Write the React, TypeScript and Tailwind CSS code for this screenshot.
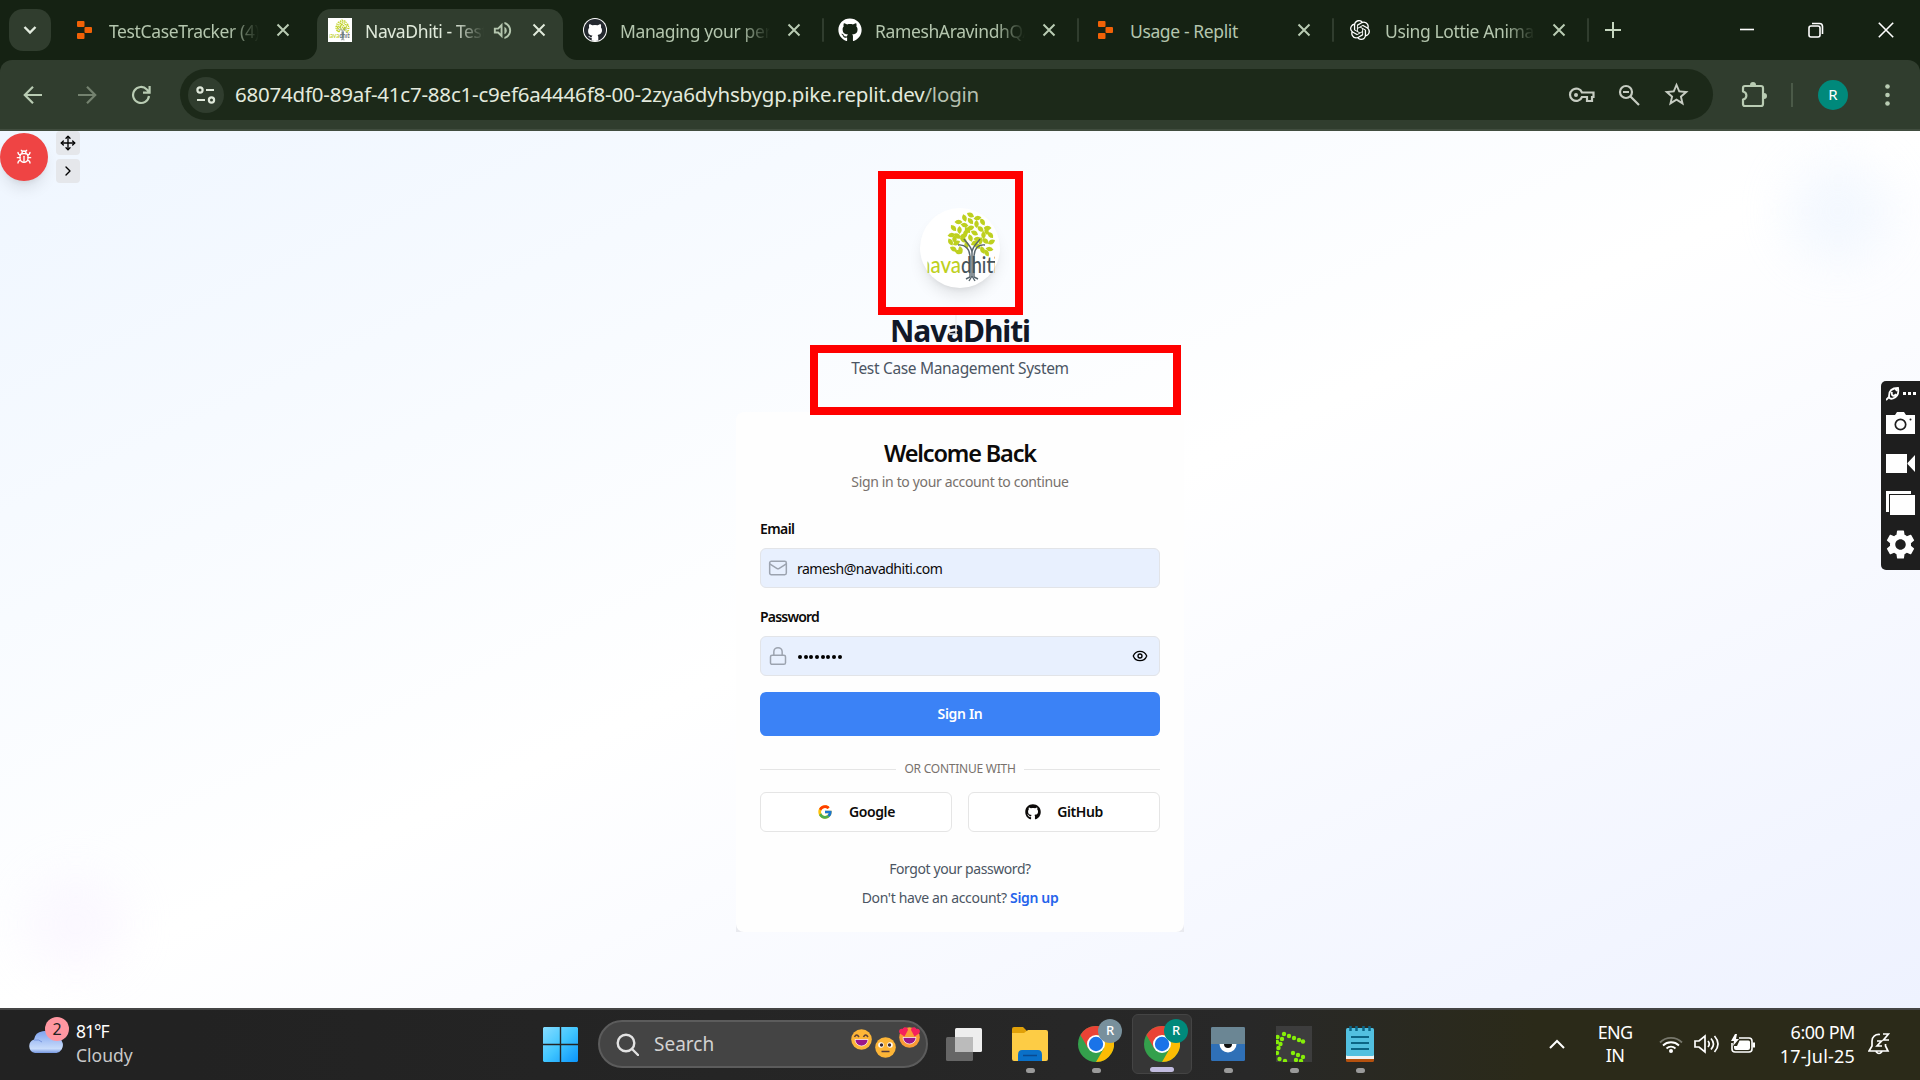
import React from "react";
import { Bug, Move, ChevronRight, Mail, Lock, Eye } from "lucide-react";
import { FaGithub } from "react-icons/fa";
import { FcGoogle } from "react-icons/fc";
import { SiOpenai } from "react-icons/si";
import { MdOutlineVolumeUp, MdStarOutline, MdSettings } from "react-icons/md";

type P = { className?: string };

const CloseX = ({ className = "" }: P) => (
  <svg viewBox="0 0 14 14" className={`h-3.5 w-3.5 shrink-0 ${className}`} fill="none" stroke="currentColor" strokeWidth="2">
    <path d="M1.5 1.5l11 11M12.5 1.5l-11 11" />
  </svg>
);

const ReplitIcon = () => (
  <svg viewBox="0 0 15 18" className="h-[18px] w-[15px]" fill="#f26207">
    <rect x="0" y="0" width="7.5" height="6" rx="1" />
    <rect x="7.5" y="6" width="7.5" height="6" rx="1" />
    <rect x="0" y="12" width="7.5" height="6" rx="1" />
  </svg>
);

const leaves: [number, number, number][] = [
  [50, 6, 0], [44, 9, 40], [57, 9, -40], [50, 12, 20], [38, 13, -30], [62, 13, 30], [44, 16, -20], [56, 15, 60],
  [33, 19, 20], [39, 21, 60], [50, 19, -50], [60, 20, 10], [67, 19, -30], [31, 26, -40], [37, 27, 10], [45, 24, 80],
  [54, 24, 0], [63, 26, 60], [70, 26, 20], [30, 33, 30], [36, 34, -60], [43, 31, 0], [50, 29, 40], [57, 30, -30],
  [65, 32, 10], [71, 33, -60], [33, 40, 0], [40, 41, 50], [62, 41, 40], [69, 40, -20], [38, 43, -20], [66, 44, 30],
  [46, 36, 60], [57, 37, 10], [34, 30, 60], [60, 32, 70], [54, 34, -60], [43, 27, -50], [66, 22, 50], [47, 21, 20],
];

const TreeLogo = ({ className = "", small = false }: P & { small?: boolean }) => (
  <svg viewBox={small ? "4 0 78 78" : "0 0 80 80"} className={className}>
    <defs>
      <clipPath id={small ? "clipSmall" : "clipBig"}>
        <rect x="7.5" y="0" width="67.5" height="80" />
      </clipPath>
    </defs>
    <g fill="#bed01f">
      {leaves.map(([x, y, r], i) => (
        <path key={i} d="M-4 0Q0-4.600 4 0Q0 4.600-4 0" transform={`translate(${x + 0.5} ${y + 1}) rotate(${r + 30})`} />
      ))}
    </g>
    <g fill="none" stroke="#57646b" strokeWidth="1.400">
      <path d="M38 37c7-1 12 4 12 12v20l-4 2M65 37c-7-1-11 4-11 12v20l4 2" />
      <path d="M44 31c3 5 8 7 8 14v24M60 31c-3 5-8 7-8 14M52 68l-3 5M52 68l3 5" />
    </g>
    <g clipPath={small ? "url(#clipSmall)" : "url(#clipBig)"}>
      <text x="-1" y="65" fontFamily="Lato, sans-serif" fontSize="23" fontWeight="500" textLength="42" lengthAdjust="spacingAndGlyphs" fill="#bed01f">nava</text>
      <text x="41" y="65" fontFamily="Lato, sans-serif" fontSize="23" fontWeight="500" textLength="37" lengthAdjust="spacingAndGlyphs" fill="#46545b">dhiti</text>
    </g>
  </svg>
);

const ghInverse = (
  <span className="flex h-6 w-6 items-center justify-center rounded-full bg-white">
    <span className="flex h-[22px] w-[22px] items-center justify-center overflow-hidden rounded-full bg-[#24292f]">
      <svg viewBox="0 0 22 22" className="h-[22px] w-[22px]" fill="#fff">
        <path d="M5.2 5.2c1.200 0 2.300.5 3 1.100a11 11 0 0 1 5.600 0c.7-.6 1.800-1.100 3-1.100.5 1.300.3 2.400.1 3 .8 1 1.100 2 1.100 3.100 0 3.400-2.300 4.300-4.400 4.600.4.5.7 1.200.7 2.200V22H7.700v-3c-2 .3-2.700-.7-3.400-1.900.8-.2 1.300.1 1.900.8.400.5.900.6 1.500.4.1-.9.400-1.300.8-1.700-2.300-.3-4.400-1.300-4.400-4.700 0-1.300.400-2.300 1.100-3.100-.2-.7-.4-1.800 0-3.600z" />
      </svg>
    </span>
  </span>
);

function Tab({ icon, title, fade = true, divider = false }: { icon: React.ReactNode; title: string; fade?: boolean; divider?: boolean }) {
  return (
    <div className="relative flex h-[42px] w-[255px] shrink-0 items-center pl-4 text-[#b4c6ae]">
      <span className="flex w-6 shrink-0 justify-center">{icon}</span>
      <span className={`ml-[13px] w-[150px] shrink-0 overflow-hidden whitespace-nowrap pt-[3px] text-[17.5px] tracking-[-0.38px] ${fade ? "[mask-image:linear-gradient(to_right,black_80%,transparent)]" : ""}`}>{title}</span>
      <CloseX className="ml-[17px] text-[#b9ccb3]" />
      {divider && <span className="ml-[21px] h-6 w-0.5 shrink-0 rounded bg-[#303d2e]" />}
    </div>
  );
}

function TabStrip() {
  return (
    <div className="flex h-[60px] items-start bg-[#152213] pt-[9px]">
      <div className="ml-[9px] flex h-[42px] w-[42px] shrink-0 items-center justify-center rounded-[14px] bg-[#303d2e] text-[#e3ecdf]">
        <svg viewBox="0 0 14 10" className="h-2.5 w-3.5" fill="none" stroke="currentColor" strokeWidth="2.4"><path d="M1.500 2l5.500 5.500L12.500 2" /></svg>
      </div>
      <div className="flex w-[266px] shrink-0 overflow-hidden pl-[5px]">
        <Tab icon={<ReplitIcon />} title="TestCaseTracker (4)" />
      </div>
      <div className="relative flex h-[51px] w-[246px] shrink-0 items-center rounded-t-[14px] bg-[#303d2e] pb-[9px] pl-[11px] text-[#e0eadb]">
        <svg viewBox="0 0 14 14" className="absolute bottom-0 -left-3.5 h-3.5 w-3.5" fill="#303d2e"><path d="M14 0v14H0A14 14 0 0 0 14 0" /></svg>
        <svg viewBox="0 0 14 14" className="absolute -right-3.5 bottom-0 h-3.5 w-3.5" fill="#303d2e"><path d="M0 0v14h14A14 14 0 0 1 0 0" /></svg>
        <span className="flex h-6 w-6 shrink-0 bg-white"><TreeLogo small className="h-6 w-6" /></span>
        <span className="ml-[13px] w-[119px] shrink-0 overflow-hidden pt-[3px] text-[17.5px] tracking-[-0.38px] whitespace-nowrap [mask-image:linear-gradient(to_right,black_75%,transparent)]">NavaDhiti - Test Case</span>
        <MdOutlineVolumeUp className="ml-[7px] h-[23px] w-[23px] shrink-0 text-[#b4c6ae]" />
        <CloseX className="ml-[18px]" />
      </div>
      <div className="flex pl-1">
        <Tab icon={ghInverse} title="Managing your personal" divider />
        <Tab icon={<FaGithub className="h-6 w-6 text-white" />} title="RameshAravindhQA" divider />
        <Tab icon={<ReplitIcon />} title="Usage - Replit" fade={false} divider />
        <Tab icon={<SiOpenai className="h-5 w-5 text-white" />} title="Using Lottie Animations" divider />
      </div>
      <svg viewBox="0 0 16 16" className="mt-[13px] ml-[18px] h-4 w-4 shrink-0" fill="none" stroke="#c5d6bf" strokeWidth="2"><path d="M8 0v16M0 8h16" /></svg>
      <div className="mr-[26px] ml-auto flex h-[42px] items-center text-white">
        <svg viewBox="0 0 14 14" className="h-3.5 w-3.5" stroke="currentColor" strokeWidth="1.600"><path d="M0 6.500h14" /></svg>
        <svg viewBox="0 0 16 16" className="ml-[54px] h-4 w-4" fill="none" stroke="currentColor" strokeWidth="1.600"><rect x="1" y="4" width="11" height="11" rx="2" /><path d="M4 1.500h7.500a3 3 0 0 1 3 3V12" /></svg>
        <svg viewBox="0 0 16 16" className="ml-[54px] h-4 w-4" fill="none" stroke="currentColor" strokeWidth="1.600"><path d="M.8.8l14.400 14.400M15.200.8L.8 15.200" /></svg>
      </div>
    </div>
  );
}

function Toolbar() {
  return (
    <div className="h-[71px] bg-[#152213]">
      <div className="flex h-[71px] items-center rounded-t-[12px] border-b-2 border-[#414d3f] bg-[#303d2e] text-[#b9ccb3]">
        <svg viewBox="0 0 20 20" className="ml-[23px] h-5 w-5" fill="none" stroke="currentColor" strokeWidth="2.200"><path d="M19 10H2.500M10 1.800L1.800 10l8.200 8.200" /></svg>
        <svg viewBox="0 0 20 20" className="ml-[34px] h-5 w-5 text-[#74826f]" fill="none" stroke="currentColor" strokeWidth="2.200"><path d="M1 10h16.500M10 1.800l8.200 8.200-8.200 8.200" /></svg>
        <svg viewBox="0 0 20 20" className="ml-[34px] h-5 w-5" fill="none" stroke="currentColor" strokeWidth="2.200"><path d="M18 11a8 8 0 1 1-2.200-6.600L18.300 7M18.600 1v6.600H12" /></svg>
        <div className="ml-[29px] flex h-[51px] w-[1533px] items-center rounded-full bg-[#1c2919] pr-[22px] pl-2">
          <span className="flex h-9 w-9 shrink-0 items-center justify-center rounded-full bg-[#303d2e] text-[#dfe8da]">
            <svg viewBox="0 0 20 18" className="h-[18px] w-5" fill="none" stroke="currentColor" strokeWidth="2.200"><circle cx="4" cy="4" r="2.600" /><path d="M10 4h8M1 14h8" /><circle cx="15.500" cy="14" r="2.600" /></svg>
          </span>
          <span className="ml-[11px] text-[20.500px] tracking-[-0.21px] whitespace-nowrap text-[#e3eadd]">68074df0-89af-41c7-88c1-c9ef6a4446f8-00-2zya6dyhsbygp.pike.replit.dev<span className="text-[#b6c0b0]">/login</span></span>
          <span className="ml-auto flex items-center text-[#c6ccc2]">
            <svg viewBox="0 0 27 18" className="h-[18px] w-[27px]" fill="none" stroke="currentColor" strokeWidth="2.200"><path d="M14 6.500h11.500v4.500h-1.500v4h-5v-4h-5a6.200 6.200 0 1 1 0-4.500z" /><circle cx="8" cy="9" r="2" fill="currentColor" stroke="none" /></svg>
            <svg viewBox="0 0 22 22" className="ml-[23px] h-[22px] w-[22px]" fill="none" stroke="currentColor" strokeWidth="2.200"><circle cx="8" cy="8" r="6" /><path d="M12.500 12.500l8.500 8.500M5 8h6" /></svg>
            <MdStarOutline className="ml-[22px] h-[29px] w-[29px]" />
          </span>
        </div>
        <svg viewBox="0 0 26 26" className="ml-[28px] h-[26px] w-[26px]" fill="none" stroke="currentColor" strokeWidth="2.200"><path d="M4 4h16q2 0 2 2v16q0 2-2 2H4q-2 0-2-2v-4.500c4.500-1 4.500-7 0-8V6q0-2 2-2z" strokeLinejoin="round" /><path d="M9 3a3 3 0 0 1 6 0zM23 11a3 3 0 0 1 0 6z" fill="currentColor" stroke="none" /></svg>
        <span className="ml-[24px] h-6 w-0.5 bg-[#4b5a48]" />
        <span className="ml-[25px] flex h-[30px] w-[30px] items-center justify-center rounded-full bg-[#00897b] text-[15px] text-white">R</span>
        <svg viewBox="0 0 5 22" className="ml-[37px] h-[22px] w-[5px]" fill="currentColor"><circle cx="2.500" cy="2.500" r="2.300" /><circle cx="2.500" cy="11" r="2.300" /><circle cx="2.500" cy="19.500" r="2.300" /></svg>
      </div>
    </div>
  );
}

function LoginCard() {
  return (
    <div className="h-[520px] w-[448px] rounded-lg bg-[#fefefe] px-6 pt-[25px] text-sm">
      <h2 className="text-center text-[23.500px] leading-8 font-semibold tracking-[-1.160px] text-[#0c0a09]">Welcome Back</h2>
      <p className="mt-[3px] text-center leading-5 tracking-[-0.350px] text-[#78716c]">Sign in to your account to continue</p>
      <label className="mt-[27px] block leading-5 font-semibold tracking-[-0.600px] text-[#0c0a09]">Email</label>
      <div className="mt-[9px] flex h-10 items-center rounded-md border border-[#e2e4e8] bg-[#e8f0fe] pl-[7px]">
        <Mail className="h-5 w-5 text-[#9ca3af]" strokeWidth={1.8} />
        <span className="ml-[9px] pt-0.5 tracking-[-0.500px] text-[#0c0a09]">ramesh@navadhiti.com</span>
      </div>
      <label className="mt-[19px] block leading-5 font-semibold tracking-[-0.800px] text-[#0c0a09]">Password</label>
      <div className="mt-[9px] flex h-10 items-center rounded-md border border-[#e2e4e8] bg-[#e8f0fe] pr-[11px] pl-[7px]">
        <Lock className="h-5 w-5 text-[#9ca3af]" strokeWidth={1.8} />
        <span className="ml-[10px] flex gap-[1.7px] pt-0.5">
          {Array.from({ length: 8 }, (_, i) => <span key={i} className="h-1 w-1 rounded-full bg-black" />)}
        </span>
        <Eye className="ml-auto h-4 w-4 text-black" />
      </div>
      <button className="mt-4 flex h-11 w-full items-center justify-center rounded-md bg-[#3b82f6] font-semibold tracking-[-0.3px] text-white">Sign In</button>
      <div className="mt-[24px] flex h-[18px] items-center text-xs text-[#78716c]">
        <span className="h-px flex-1 bg-[#e5e5e5]" />
        <span className="mx-2 tracking-[-0.240px] whitespace-nowrap">OR CONTINUE WITH</span>
        <span className="h-px flex-1 bg-[#e5e5e5]" />
      </div>
      <div className="mt-[14px] grid grid-cols-2 gap-4 font-semibold text-[#0c0a09]">
        <button className="flex h-10 items-center justify-center rounded-md border border-[#e5e5e5] bg-white"><FcGoogle className="mr-4 h-4 w-4" /><span className="tracking-[-0.4px]">Google</span></button>
        <button className="flex h-10 items-center justify-center rounded-md border border-[#e5e5e5] bg-white"><FaGithub className="mr-4 h-4 w-4" /><span className="tracking-[-0.4px]">GitHub</span></button>
      </div>
      <p className="mt-[27px] text-center leading-5 tracking-[-0.420px] text-[#4b5563]">Forgot your password?</p>
      <p className="mt-[9px] text-center leading-5 tracking-[-0.340px] text-[#4b5563]">Don't have an account? <span className="font-semibold text-[#2563eb]">Sign up</span></p>
    </div>
  );
}

function CapturePanel() {
  return (
    <div className="absolute top-[250px] right-0 flex h-[189px] w-[39px] flex-col items-center rounded-l-[5px] bg-[#1e1e1e] text-white">
      <svg viewBox="0 0 30 14" className="mt-[6px] h-3.5 w-[30px]" fill="none" stroke="#fff" strokeWidth="1.800">
        <path d="M3 9c0-5 3-8 9-8 1 5-1 9-5 10.500-3 .8-4-.5-4-2.500zM6 5c-1 4 2 5 4 2M0 13l3-3M9 1l2 3" />
        <g fill="#fff" stroke="none"><rect x="17" y="5" width="3" height="3" /><rect x="22" y="5" width="3" height="3" /><rect x="27" y="5" width="3" height="3" /></g>
      </svg>
      <svg viewBox="0 0 29 22" className="mt-[11px] h-[22px] w-[29px]"><path d="M0 3h9l2-3h7l2 3h9v19H0z" fill="#fff" /><circle cx="14.500" cy="12.500" r="5.200" fill="none" stroke="#1e1e1e" strokeWidth="1.700" /><circle cx="24.500" cy="7.500" r="1" fill="#1e1e1e" /></svg>
      <svg viewBox="0 0 29 19" className="mt-5 h-[19px] w-[29px]" fill="#fff"><path d="M0 0h21v19H0zM21.500 9l7.500-8v17l-7.500-8z" /></svg>
      <svg viewBox="0 0 29 24" className="mt-[18px] h-6 w-[29px]" fill="#fff"><path d="M0 0h25v3H3v18H0zM4 4h25v20H4z" /></svg>
      <MdSettings className="mt-[12px] h-[35px] w-[35px]" />
    </div>
  );
}

function Page() {
  return (
    <main className="relative flex h-[877px] flex-col items-center overflow-hidden bg-linear-to-br from-[#eff6ff] via-white to-[#eef2ff]">
      <div className="absolute top-[28px] right-[30px] h-[104px] w-[104px] rounded-full bg-[#dbeafe] opacity-30 blur-xl" />
      <div className="absolute bottom-[34px] left-[26px] h-[100px] w-[100px] rounded-full bg-[#f3e8ff] opacity-30 blur-xl" />
      <div className="absolute top-0.5 left-0 flex h-12 w-12 items-center justify-center rounded-full bg-[#ef4444] text-white shadow-lg"><Bug className="h-4 w-4" /></div>
      <div className="absolute top-0 left-14 flex h-6 w-6 items-center justify-center rounded bg-[#e5e7eb]"><Move className="h-4 w-4" /></div>
      <div className="absolute top-7 left-14 flex h-6 w-6 items-center justify-center rounded bg-[#e5e7eb]"><ChevronRight className="h-4 w-4" /></div>

      <div className="mt-[77px] h-20 w-20 rounded-full bg-white shadow-lg"><TreeLogo className="h-20 w-20" /></div>
      <h1 className="mt-[25px] text-[30px] leading-9 font-bold tracking-[-1.100px] whitespace-nowrap text-[#111827]">NavaDhiti</h1>
      <p className="mt-[7px] mb-[32px] h-6 text-[15.500px] leading-6 tracking-[-0.330px] whitespace-nowrap text-[#4b5563]">Test Case Management System</p>
      <div className="flex h-[520px] bg-linear-to-b from-transparent from-98% to-[#e9eaef] to-98%"><LoginCard /></div>

      <svg viewBox="0 0 12 24" className="absolute top-[184px] left-[947px] h-6 w-3" fill="none" stroke="#f1f1f3" strokeWidth="1.500"><path d="M9 0v19M1 17l7-2M2 19h6" /></svg>
      <div className="absolute top-[40px] left-[878px] h-36 w-[145px] border-8 border-[#ff0000]" />
      <div className="absolute top-[214px] left-[810px] h-[70px] w-[371px] border-8 border-[#ff0000]" />
      <CapturePanel />
    </main>
  );
}

const Chrome = ({ badge }: { badge: string }) => (
  <span className="relative flex h-9 w-9">
    <svg viewBox="0 0 36 36" className="h-9 w-9">
      <circle cx="18" cy="18" r="18" fill="#34a04c" />
      <path d="M18 9h15.600A18 18 0 0 1 18 36l7.800-13.500z" fill="#fbbc04" />
      <path d="M2.400 9A18 18 0 0 1 33.600 9H18l-7.800 13.500z" fill="#ea4335" />
      <circle cx="18" cy="18" r="9" fill="#fff" /><circle cx="18" cy="18" r="7.200" fill="#1a73e8" />
    </svg>
    <span className={`absolute -top-[7px] left-5 flex h-6 w-6 items-center justify-center rounded-full text-[13px] font-medium text-white ${badge}`}>R</span>
  </span>
);

function AppSlot({ children, active = false, idle = false }: { children: React.ReactNode; active?: boolean; idle?: boolean }) {
  return (
    <div className={`relative flex h-[60px] w-[60px] items-center justify-center rounded-md ${active ? "border border-[#444] bg-[#363636]" : ""}`}>
      {children}
      {!idle && <span className={`absolute bottom-px h-[5px] rounded-full ${active ? "w-6 bg-[#c2bce0]" : "w-[9px] bg-[#9a9a9a]"}`} />}
    </div>
  );
}

const Face = ({ kind, className = "" }: P & { kind: "grin" | "flat" | "love" }) => (
  <svg viewBox="0 0 21 21" className={`h-[21px] w-[21px] overflow-visible ${className}`}>
    <circle cx="10.500" cy="10.500" r="10.300" fill={kind === "love" ? "#f99b35" : "#fdb537"} />
    {kind === "flat" ? (
      <g><circle cx="6" cy="8" r="2.800" fill="#fff" /><circle cx="15" cy="8" r="2.800" fill="#fff" /><circle cx="6.500" cy="8" r="1.700" fill="#3d2a32" /><circle cx="14.500" cy="8" r="1.700" fill="#3d2a32" /><path d="M6.500 14.500h8" stroke="#553b3b" strokeWidth="1.500" /></g>
    ) : (
      <path d="M4 10.500h13a6.500 6.500 0 0 1-13 0z" fill="#9b1689" stroke="#fff" strokeWidth=".7" />
    )}
    {kind === "grin" && <path d="M3.500 8q2-4 4.500 0M12.500 8q2-4 4.500 0" stroke="#5d4037" strokeWidth="1.500" fill="none" />}
    {kind === "love" && (
      <g fill="#f5205c">
        <path d="M5.500 9.500L1 6.500C-1 4.500.5 1 3.500 2 4.500-.5 9-.5 9 3z" />
        <path d="M15.500 9.500L20 6.500c2-2 .5-5.500-2.500-4.500C16.500-.5 12-.5 12 3z" />
      </g>
    )}
  </svg>
);

const dots: [number, number][] = [[8, 8], [13, 10], [18, 12], [23, 14], [27, 15.5], [6, 13], [1.5, 11], [4.5, 18], [1, 16], [2.5, 22], [1, 27], [3.5, 33], [9, 35], [17, 27], [22, 29], [27, 31], [20, 34], [25, 35]];

function Taskbar() {
  return (
    <footer className="flex h-[72px] items-start border-t-2 border-[#454545] bg-linear-to-r from-[#222222] from-10% via-[#282828] via-65% to-[#2b2a19] to-80% pt-1 text-[18px] text-white">
      <div className="relative ml-[28px] flex h-[60px] w-[570px]">
        <svg viewBox="0 0 36 23" className="mt-[16px] h-[23px] w-9"><defs><linearGradient id="cl" x2="0" y2="1"><stop stopColor="#7fa3ee" /><stop offset=".8" stopColor="#c9dcfb" /><stop offset="1" stopColor="#7597e0" /></linearGradient></defs><path d="M7 23a7 7 0 0 1-1-13.500A10 10 0 0 1 25 7a8 8 0 0 1 3.500 16z" fill="url(#cl)" /><path d="M6 10q5-1 8 2" stroke="#7896de" fill="none" /></svg>
        <span className="absolute top-[3px] left-[17px] flex h-6 w-6 items-center justify-center rounded-full bg-[#ff97a1] text-[16px] text-[#222]">2</span>
        <div className="ml-3 pt-[5px] text-[17.500px] leading-6"><div className="tracking-[-1px]">81°F</div><div className="text-[#c9c9c9]">Cloudy</div></div>
        <svg viewBox="0 0 35 35" className="absolute top-[13px] left-[515px] h-[35px] w-[35px]"><defs><linearGradient id="win" x2="1" y2="1"><stop stopColor="#86dcff" /><stop offset=".5" stopColor="#41c6ff" /><stop offset="1" stopColor="#0a94fb" /></linearGradient></defs><path d="M1 0h15.800v16.800H0V1zM18.200 0H34l1 1v15.800H18.200zM0 18.200h16.800V35H1l-1-1zM18.200 18.200H35V34l-1 1H18.200z" fill="url(#win)" /></svg>
      </div>
      <div className="mt-1.5 flex h-12 w-[330px] shrink-0 items-center rounded-full border-2 border-[#5c5c5c] bg-[#444] pr-[6px] pl-4">
        <svg viewBox="0 0 23 23" className="h-[23px] w-[23px]" fill="none" stroke="#e2e2e2" strokeWidth="2.400"><circle cx="10" cy="10" r="8.300" /><path d="M16 16l6 6" strokeLinecap="round" /></svg>
        <span className="ml-[15px] text-[19px] text-[#d2d2d2]">Search</span>
        <span className="ml-auto flex gap-[3px]"><Face kind="grin" className="-mt-0.5" /><Face kind="flat" className="mt-1.5" /><Face kind="love" className="-mt-1" /></span>
      </div>
      <div className="ml-[6px] flex gap-[6px]">
        <AppSlot idle><svg viewBox="0 0 36 36" className="h-9 w-9"><rect x="0" y="11" width="27" height="24" rx="1.500" fill="#666" /><rect x="9" y="2" width="27" height="24" rx="1.500" fill="#eee" /><rect x="9" y="11" width="18" height="15" fill="#bbb" /></svg></AppSlot>
        <AppSlot><svg viewBox="0 0 36 34" className="h-[34px] w-9"><path d="M0 2q0-2 2-2h9l4 4v8H0z" fill="#e0a008" /><path d="M0 6h12l4-3h18q2 0 2 2v27q0 2-2 2H2q-2 0-2-2z" fill="#fdcc45" /><path d="M6 34v-6q0-5 4-5h16q4 0 4 5v6z" fill="#0a70c8" /><path d="M11 28.500h14" stroke="#0a4a90" strokeWidth="1.500" /></svg></AppSlot>
        <AppSlot><Chrome badge="bg-[#78909c]" /></AppSlot>
        <AppSlot active><Chrome badge="bg-[#00897b]" /></AppSlot>
        <AppSlot><svg viewBox="0 0 34 34" className="h-[34px] w-[34px]"><rect width="34" height="34" rx="1.500" fill="#2f70b7" /><path d="M0 1.500Q0 0 1.500 0h31Q34 0 34 1.500V17H0z" fill="#6b8694" /><path d="M8.500 17a8.500 8.500 0 0 0 17 0z" fill="#fff" /><path d="M13 17a4 4 0 0 0 8 0z" fill="#111" /></svg></AppSlot>
        <AppSlot><svg viewBox="0 0 36 36" className="h-9 w-9"><rect width="36" height="36" fill="#3d3d3d" />{dots.map(([x, y], i) => <circle key={i} cx={x} cy={y} r="2.200" fill="#86ef08" />)}</svg></AppSlot>
        <AppSlot><svg viewBox="0 0 28 36" className="h-9 w-7"><rect y="28" width="28" height="8" rx="1.500" fill="#b5510e" /><rect y="26" width="28" height="7" fill="#f3f3f3" /><rect y="2" width="28" height="28" rx="1.500" fill="#52c0e0" /><path d="M5 11h18M5 17h18M5 23h18" stroke="#0b6586" strokeWidth="2" /><path d="M4.500 0v5M10.500 0v5M17.500 0v5M23.500 0v5" stroke="#0b6586" strokeWidth="2.500" /></svg></AppSlot>
      </div>
      <div className="mr-[30px] ml-auto flex h-[60px] items-center">
        <svg viewBox="0 0 16 10" className="mr-[31px] h-2.5 w-4" fill="none" stroke="#fff" strokeWidth="2"><path d="M1 9l7-7 7 7" /></svg>
        <div className="w-[38px] text-center text-[18px] leading-[23px] tracking-[-0.7px]">ENG<br />IN</div>
        <svg viewBox="0 0 24 18" className="ml-[25px] h-[18px] w-6" fill="none" stroke="#fff" strokeWidth="1.800"><path d="M1 7.500a15.500 15.500 0 0 1 22 0" stroke="#77776c" /><path d="M4 10.500a11.500 11.500 0 0 1 16 0M7.500 13.500a6.500 6.500 0 0 1 9 0" /><circle cx="12" cy="16" r="2" fill="#fff" stroke="none" /></svg>
        <svg viewBox="0 0 25 20" className="ml-[11px] h-5 w-[25px]" fill="none" stroke="#fff" strokeWidth="1.700"><path d="M1 7h4l6-5v16l-6-5H1zM14 7q2.500 3 0 6M17 4.500q5 5.500 0 11M20.500 2q7 8 0 16" /></svg>
        <svg viewBox="0 0 24 20" className="ml-3 h-5 w-6" fill="none" stroke="#fff" strokeWidth="1.600"><path d="M8 4h10q3 0 3 3v8q0 3-3 3H4q-3 0-3-3V9" /><path d="M8.500 6.500h9q1.500 0 1.500 1.500v6q0 2-2 2H5q-2 0-2-2v-2h3z" fill="#fff" stroke="none" /><path d="M4 0L0 7h3l-1 5 6-7H5l1-5zM21.500 8.500H24v5h-2.500z" fill="#fff" stroke="none" /></svg>
        <div className="ml-[20px] w-[80px] text-right text-[18px] leading-6 whitespace-nowrap"><div className="tracking-[-0.450px]">6:00 PM</div><div className="tracking-[0.200px]">17-Jul-25</div></div>
        <svg viewBox="0 0 22 22" className="ml-[13px] h-[22px] w-[22px]" fill="none" stroke="#fff" strokeWidth="1.700"><path d="M12 1.500C7 1 4 4 4 8v5l-3 5h19l-2.500-5v-2M8 18.500q3 4 6 0M9 8h4.500L9 13h5M15 1h5.500L15.500 7H21" /></svg>
      </div>
    </footer>
  );
}

export default function App() {
  return (
    <div className="h-[1080px] w-[1920px] overflow-hidden font-['Noto_Sans','Open_Sans',sans-serif]">
      <TabStrip />
      <Toolbar />
      <Page />
      <Taskbar />
    </div>
  );
}
